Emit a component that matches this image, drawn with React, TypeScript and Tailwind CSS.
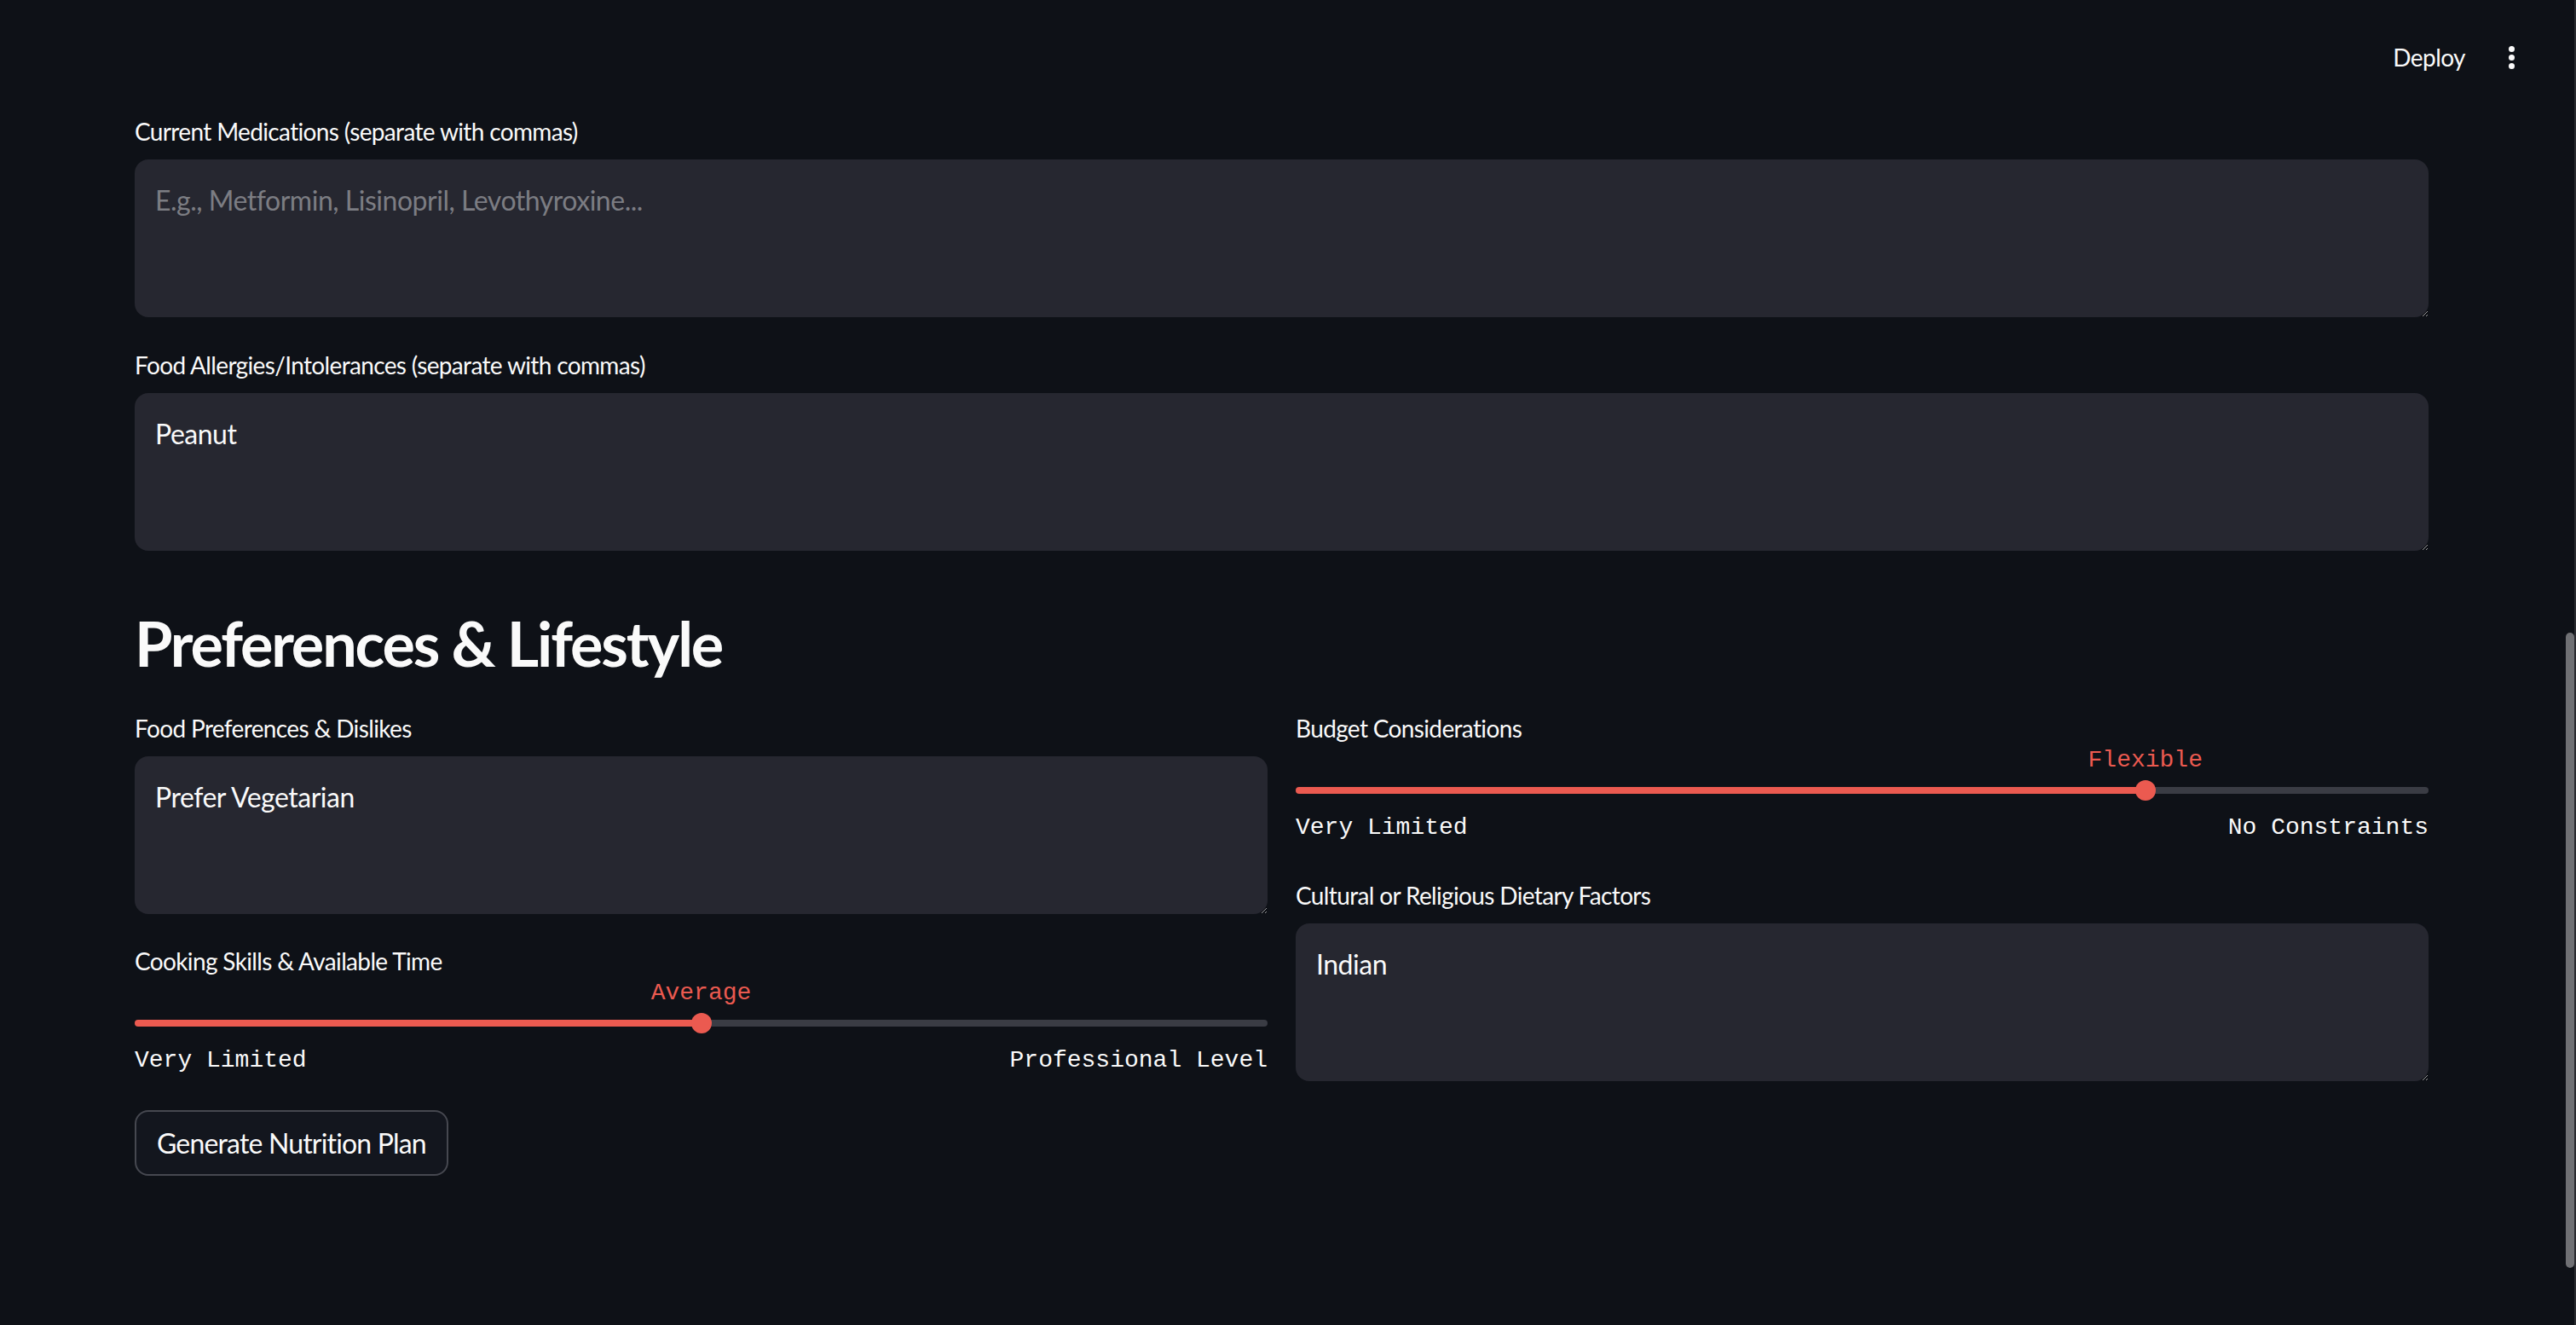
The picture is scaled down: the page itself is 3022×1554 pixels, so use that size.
import React from 'react';

const sans = { fontFamily: 'Lato, "Noto Sans", sans-serif' };
const mono = { fontFamily: '"Liberation Mono", "DejaVu Sans Mono", monospace' };

function Label({ text }: { text: string }) {
  return (
    <div className="h-[40px] leading-[40px] text-[28px] tracking-[-0.023em] text-[#fafafa]" style={sans}>
      {text}
    </div>
  );
}

function TextArea({ value, placeholder }: { value?: string; placeholder?: string }) {
  return (
    <textarea
      readOnly
      defaultValue={value}
      placeholder={placeholder}
      className="mt-[13px] block w-full h-[185px] rounded-[16px] bg-[#262730] px-[24px] py-[24px] text-[32px] leading-[48px] tracking-[-0.015em] text-[#fafafa] placeholder:text-[#7c7d83] outline-none resize-y"
      style={sans}
    />
  );
}

function Slider({ label, value, pct, min, max }: { label: string; value: string; pct: number; min: string; max: string }) {
  return (
    <div>
      <Label text={label} />
      <div className="relative h-[36px]">
        <span
          className="absolute top-0 -translate-x-1/2 text-[28px] leading-[36px] text-[#eb5a50] whitespace-nowrap"
          style={{ ...mono, left: `${pct}%` }}
        >
          {value}
        </span>
      </div>
      <div className="relative h-[34px] flex items-center">
        <div className="flex w-full h-[8px] rounded-full overflow-hidden">
          <div className="h-full bg-[#eb5a50]" style={{ width: `${pct}%` }} />
          <div className="h-full flex-1 bg-[#3a3c44]" />
        </div>
        <div
          className="absolute top-1/2 w-[24px] h-[24px] -translate-x-1/2 -translate-y-1/2 rounded-full bg-[#eb5a50]"
          style={{ left: `${pct}%` }}
        />
      </div>
      <div className="mt-[9px] flex justify-between h-[36px] leading-[36px] text-[28px] text-[#fafafa]" style={mono}>
        <span>{min}</span>
        <span>{max}</span>
      </div>
    </div>
  );
}

export default function App() {
  return (
    <div className="relative w-full h-[1554px] overflow-hidden bg-[#0e1117]">
      <div className="h-[134px] flex items-center justify-end pr-[72px]">
        <span className="text-[28px] tracking-[-0.02em] text-[#fafafa]" style={sans}>Deploy</span>
        <div className="ml-[51px] flex flex-col gap-[3px]">
          <span className="block w-[7px] h-[7px] rounded-full bg-[#fafafa]" />
          <span className="block w-[7px] h-[7px] rounded-full bg-[#fafafa]" />
          <span className="block w-[7px] h-[7px] rounded-full bg-[#fafafa]" />
        </div>
      </div>

      <div className="pl-[158px] pr-[173px]">
        <Label text="Current Medications (separate with commas)" />
        <TextArea placeholder="E.g., Metformin, Lisinopril, Levothyroxine..." />

        <div className="mt-[36px]">
          <Label text="Food Allergies/Intolerances (separate with commas)" />
          <TextArea value="Peanut" />
        </div>

        <h2 className="mt-[64px] h-[88px] leading-[88px] text-[72px] font-bold tracking-[-0.03em] text-[#fafafa]" style={sans}>
          Preferences &amp; Lifestyle
        </h2>

        <div className="mt-[36px] grid grid-cols-2 gap-[33px] items-start">
          <div>
            <Label text="Food Preferences & Dislikes" />
            <TextArea value="Prefer Vegetarian" />
            <div className="mt-[35px]">
              <Slider label="Cooking Skills & Available Time" value="Average" pct={50} min="Very Limited" max="Professional Level" />
            </div>
            <button
              className="mt-[40px] h-[77px] px-[24px] rounded-[16px] border-2 border-[#464850] bg-[#13161e] text-[32px] tracking-[-0.026em] text-[#fafafa]"
              style={sans}
            >
              Generate Nutrition Plan
            </button>
          </div>
          <div>
            <Slider label="Budget Considerations" value="Flexible" pct={75} min="Very Limited" max="No Constraints" />
            <div className="mt-[41px]">
              <Label text="Cultural or Religious Dietary Factors" />
              <TextArea value="Indian" />
            </div>
          </div>
        </div>
      </div>

      <div className="absolute right-[2px] top-[742px] w-[10px] h-[745px] rounded-full bg-[#6f7074]" />
      <div className="absolute right-0 top-0 bottom-0 w-[2px] bg-[#2a2b30]" />
    </div>
  );
}
